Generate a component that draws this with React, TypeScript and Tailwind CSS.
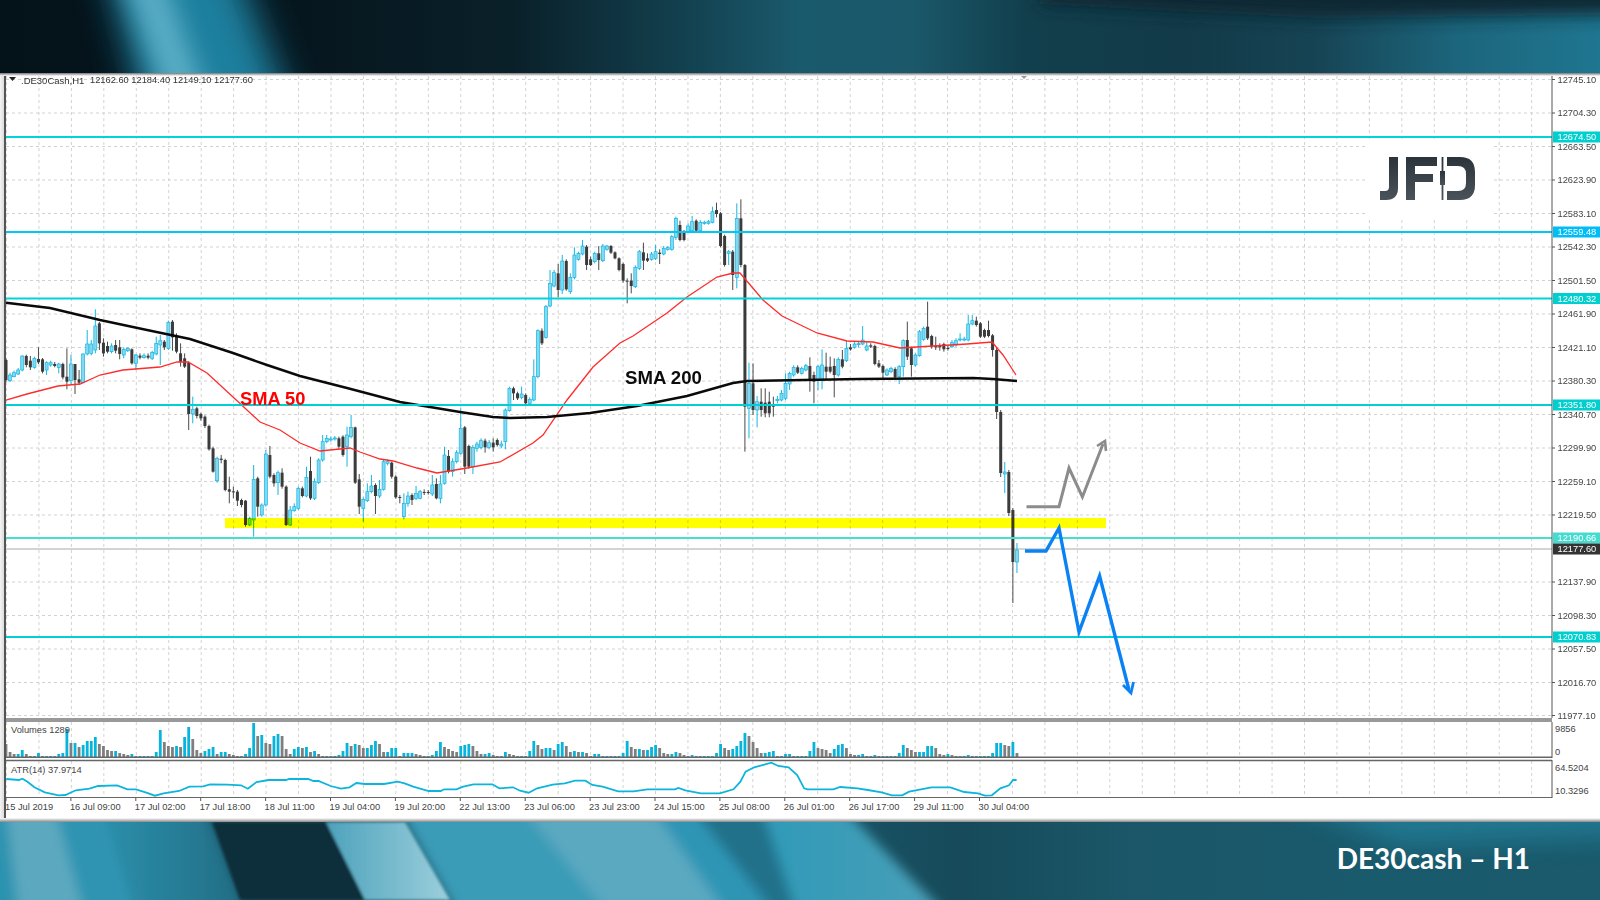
// candles as [open, close, high?, low?] in crop pixels, converted to page y below
type Raw = number[];

const leftBars: Raw[] = [
  [210, 270, 205, 275], [272, 255, 248, 276], [260, 248, 242, 262], [252, 240, 234, 255], [240, 198, 196, 244], [198, 225, 194, 232], [212, 232, 198, 240], [232, 205, 200, 236],
  [207, 217, 172, 222], [208, 245, 204, 250], [240, 218, 214, 255], [225, 218, 212, 230], [222, 228, 216, 232], [232, 222, 218, 250], [222, 262, 218, 268], [260, 275, 175, 298],
  [272, 222, 195, 285], [222, 270, 222, 312], [268, 278, 240, 285], [278, 192, 190, 280], [192, 162, 120, 196], [190, 162, 150, 196], [180, 108, 58, 190], [100, 160, 96, 180],
  [158, 190, 145, 200], [168, 185, 155, 190], [185, 168, 160, 190], [165, 182, 150, 190], [172, 192, 150, 208], [195, 178, 172, 205], [182, 175, 172, 186], [178, 220, 175, 224],
  [220, 195, 192, 240], [197, 203, 190, 208], [203, 197, 190, 206], [197, 203, 190, 208], [205, 187, 182, 210], [192, 160, 140, 196], [165, 152, 135, 225], [155, 172, 150, 180],
  [175, 97, 92, 180], [95, 142, 90, 182], [140, 185, 130, 190], [190, 215, 160, 230], [205, 230, 190, 234], [218, 372, 214, 420], [372, 358, 320, 400], [355, 378, 350, 385],
  [372, 385, 368, 392], [380, 408, 376, 414], [408, 478, 404, 482], [475, 545, 470, 548], [572, 505, 500, 578], [506, 510, 495, 520], [510, 600, 506, 604], [598, 605, 560, 640],
  [604, 607, 590, 625], [605, 632, 600, 648], [630, 645, 626, 652], [632, 705, 630, 710], [705, 685, 680, 708], [690, 568, 525, 740], [565, 650, 560, 680], [675, 645, 640, 680],
  [645, 492, 480, 650], [495, 560, 468, 565], [555, 580, 550, 590], [578, 548, 542, 615], [548, 590, 535, 596], [590, 705, 586, 708], [705, 660, 648, 708], [662, 650, 640, 665],
  [655, 595, 590, 660], [595, 618, 590, 622], [618, 562, 530, 622], [543, 625, 500, 630], [625, 575, 565, 630], [578, 510, 505, 582], [510, 455, 435, 515], [455, 445, 435, 460],
  [450, 447, 440, 455], [447, 444, 438, 452], [445, 470, 440, 476], [440, 495, 436, 500], [470, 435, 410, 530], [440, 412, 375, 445], [412, 578, 410, 582], [568, 650, 552, 672],
  [655, 628, 622, 695], [632, 605, 580, 636], [605, 588, 555, 610], [585, 618, 580, 672], [618, 598, 570, 624], [598, 515, 510, 602], [520, 515, 508, 526], [518, 560, 515, 566],
  [560, 622, 556, 626], [621, 624, 615, 640], [680, 640, 610, 688], [640, 618, 605, 650], [615, 630, 610, 645], [625, 610, 588, 630], [625, 605, 600, 628], [606, 609, 598, 615],
  [606, 609, 600, 614], [612, 585, 555, 618], [582, 625, 565, 628], [625, 582, 555, 640], [580, 495, 470, 584], [498, 545, 480, 550], [545, 515, 505, 560], [515, 488, 480, 520],
  [490, 415, 355, 494], [412, 530, 408, 552], [468, 530, 464, 536], [530, 472, 465, 552], [475, 462, 455, 485], [472, 452, 445, 478], [452, 472, 446, 488], [472, 458, 450, 478],
  [458, 472, 445, 485], [450, 465, 445, 470], [468, 462, 452, 475], [455, 360, 355, 478], [362, 295, 290, 365], [295, 310, 290, 330], [310, 325, 305, 330],
];

const rightBars: Raw[] = [
  [622, 612, 590, 628], [615, 640, 610, 645], [640, 628, 622, 645], [630, 560, 508, 634], [560, 422, 418, 565], [422, 460, 415, 465], [442, 350, 345, 446], [348, 280, 240, 352],
  [288, 248, 240, 292], [250, 300, 222, 322], [300, 213, 195, 312], [213, 298, 208, 302], [305, 262, 250, 312], [262, 195, 172, 268], [208, 190, 185, 212], [192, 168, 150, 196],
  [170, 225, 165, 240], [208, 225, 200, 228], [215, 190, 185, 220], [190, 210, 168, 240], [212, 168, 162, 216], [178, 168, 165, 182], [168, 188, 165, 192], [187, 205, 184, 208],
  [205, 240, 202, 244], [222, 272, 218, 278], [272, 275, 265, 340], [272, 288, 250, 310], [290, 232, 226, 294], [235, 185, 180, 240], [187, 212, 158, 240], [205, 212, 190, 216],
  [208, 192, 186, 212], [205, 185, 165, 210], [188, 192, 178, 222], [192, 175, 168, 196], [178, 173, 168, 182], [178, 140, 135, 182], [142, 85, 80, 150], [105, 150, 92, 154],
  [125, 150, 120, 154], [125, 108, 100, 128], [122, 95, 78, 126], [92, 122, 88, 126], [122, 97, 90, 126], [100, 97, 92, 104], [100, 95, 90, 104], [97, 65, 50, 100],
  [60, 72, 38, 82], [70, 168, 66, 172], [138, 225, 134, 230], [190, 185, 180, 225], [185, 255, 180, 300], [262, 85, 40, 295], [85, 225, 28, 232], [225, 650, 222, 785],
  [655, 580, 518, 745], [580, 660, 520, 675], [660, 635, 618, 712], [635, 660, 595, 680], [638, 670, 595, 682], [635, 670, 605, 682], [646, 650, 620, 680], [632, 628, 618, 640],
  [630, 610, 600, 634], [625, 580, 550, 630], [582, 550, 545, 600], [555, 532, 526, 560], [532, 548, 526, 552], [550, 535, 530, 554], [540, 527, 522, 544], [528, 570, 502, 605],
  [555, 575, 545, 640], [570, 530, 525, 600], [570, 525, 478, 598], [530, 545, 488, 570], [530, 545, 500, 550], [528, 555, 505, 622], [555, 508, 502, 560], [508, 530, 480, 535],
  [512, 475, 452, 516], [472, 478, 462, 482], [472, 462, 456, 476], [464, 461, 456, 472], [462, 450, 408, 466], [480, 468, 455, 484], [466, 470, 460, 474], [468, 522, 464, 526],
  [520, 530, 510, 534], [528, 548, 524, 565], [555, 540, 535, 558], [545, 535, 530, 550], [537, 562, 532, 566], [560, 530, 525, 582], [530, 452, 448, 560], [450, 500, 395, 510],
  [475, 525, 470, 560], [525, 495, 490, 530], [497, 425, 420, 500], [448, 415, 410, 452], [410, 445, 335, 450], [438, 470, 434, 476], [468, 472, 440, 480], [468, 472, 460, 482],
  [462, 478, 458, 485], [474, 477, 465, 482], [470, 458, 450, 474], [465, 452, 445, 470], [450, 447, 430, 454], [449, 447, 440, 454], [450, 402, 375, 454], [402, 392, 375, 406],
  [392, 405, 380, 410], [400, 440, 396, 444], [420, 440, 416, 444], [420, 438, 392, 442], [436, 480, 432, 500],
];

// last bars, read directly as page y
const lastBars: Raw[] = [
  [350, 412, 348, 419], [412, 473, 410, 477], [474, 472, 462, 493], [472, 513, 470, 516], [510, 562, 508, 603], [562, 550, 543, 573],
];

const candles = [
  ...leftBars.map((b) => b.map((v) => 290 + v / 3)),
  ...rightBars.map((b) => b.map((v) => 190 + v / 3)),
  ...lastBars,
];

const barX = (k: number) => 6 + 4.06 * k;

const volumes = [
  13, 5, 3, 3, 7, 3, 1, 1, 4, 1, 1, 1, 1, 3, 4, 28, 14, 14, 10, 12, 16, 16, 20, 13, 11, 7, 6, 6, 4, 3, 2, 3, 1, 1, 1, 1, 1, 5, 27, 15, 11, 10, 11, 10, 20, 30, 18, 7, 4, 6,
  8, 10, 3, 5, 5, 3, 2, 1, 1, 3, 9, 34, 21, 22, 14, 13, 21, 23, 21, 8, 3, 8, 10, 9, 10, 5, 6, 3, 1, 1, 1, 1, 2, 6, 14, 11, 13, 12, 9, 9, 12, 16, 13, 5, 5, 9, 9, 1, 4, 4,
  4, 3, 2, 1, 1, 2, 6, 15, 10, 8, 6, 5, 11, 12, 13, 11, 6, 3, 3, 4, 2, 1, 1, 5, 3, 2, 1, 1, 1, 6, 16, 12, 8, 9, 9, 7, 13, 15, 11, 5, 6, 5, 5, 4, 1, 3, 3, 1, 1, 1,
  1, 1, 4, 16, 10, 8, 8, 7, 7, 10, 12, 9, 4, 3, 3, 5, 4, 2, 1, 2, 1, 1, 1, 1, 1, 4, 13, 9, 7, 8, 11, 16, 24, 21, 15, 9, 4, 4, 5, 6, 1, 1, 3, 3, 1, 1, 1, 1, 6, 15,
  9, 8, 7, 4, 8, 12, 13, 9, 3, 2, 2, 3, 1, 1, 2, 1, 1, 1, 1, 1, 4, 12, 9, 7, 5, 5, 5, 11, 11, 9, 3, 2, 3, 2, 1, 1, 1, 2, 1, 1, 1, 1, 1, 4, 14, 14, 12, 11, 15, 4,
];

const sma200 = '6,302.7 50,308 100,320 147,330 190,339 233,353 267,365 300,376 347,388 400,402 460,412 493,417 510,418 547,417 590,413 637,406 687,396 733,383 747,381 860,379 973,378 993,379 1017,381';
const sma50 = '6,400 27,394 58,386 80,384 100,375 123,370 160,367 177,362 188,362 207,373 233,397 260,422 280,430 300,443 320,451 350,448 360,452 380,459 393,461 417,468 437,473 467,468 500,462 533,443 543,435 567,400 593,367 620,343 633,336 667,313 687,297 717,277 733,273 740,273 763,300 782,316 817,333 847,341 873,342 900,348 933,346 967,344 992,342 1003,355 1016,375';

const atrA = [18, 207, 55, 210, 65, 206, 80, 215, 100, 232, 130, 247, 170, 256, 190, 255, 220, 241, 260, 236, 285, 228, 340, 226, 370, 238, 395, 238, 425, 248, 450, 257, 475, 250, 520, 243, 550, 230, 590, 229, 610, 223, 660, 224, 700, 226, 720, 236, 745, 216, 780, 210, 830, 210, 840, 207, 895, 207, 910, 213, 925, 213, 960, 228, 990, 236, 1015, 232, 1035, 219, 1060, 222, 1115, 222, 1155, 215, 1175, 220, 1200, 230, 1245, 243, 1280, 243, 1290, 238, 1325, 238, 1345, 230, 1375, 223, 1430, 223, 1450, 235, 1490, 232];
const atrB = [0, 242, 25, 248, 50, 235, 95, 224, 130, 220, 160, 212, 190, 212, 210, 225, 240, 230, 285, 244, 330, 244, 370, 238, 450, 238, 460, 234, 480, 241, 525, 250, 580, 250, 620, 238, 640, 215, 655, 185, 680, 172, 730, 158, 750, 168, 780, 172, 805, 195, 825, 235, 835, 238, 910, 238, 930, 231, 980, 235, 1010, 240, 1050, 247, 1080, 256, 1110, 256, 1130, 245, 1195, 232, 1250, 232, 1290, 246, 1330, 250, 1350, 257, 1370, 256, 1395, 235, 1420, 226, 1432, 210, 1442, 210];

function atrPoints() {
  const pts: string[] = [];
  for (let i = 0; i < atrA.length; i += 2) pts.push(`${(atrA[i] / 2.904).toFixed(1)},${(710 + atrA[i + 1] / 3).toFixed(1)}`);
  for (let i = 0; i < atrB.length; i += 2) pts.push(`${(520 + atrB[i] / 2.904).toFixed(1)},${(710 + atrB[i + 1] / 3).toFixed(1)}`);
  return pts.join(' ');
}

const priceTicks: [string, number][] = [
  ['12745.10', 79.5], ['12704.30', 113], ['12663.50', 146.5], ['12623.90', 180], ['12583.10', 213.5], ['12542.30', 247], ['12501.50', 280.5],
  ['12461.90', 314], ['12421.10', 347.5], ['12380.30', 381], ['12340.70', 414.5], ['12299.90', 448], ['12259.10', 481.5], ['12219.50', 515],
  ['12137.90', 582], ['12098.30', 615.5], ['12057.50', 649], ['12016.70', 682.5], ['11977.10', 715.5],
];

const levels = [
  { label: '12674.50', y: 137, line: '#00d4d8', box: '#00cfcf', w: 2 },
  { label: '12559.48', y: 232, line: '#00c8f5', box: '#00bdf5', w: 2 },
  { label: '12480.32', y: 298.5, line: '#00d4d8', box: '#00cfcf', w: 2 },
  { label: '12351.80', y: 405, line: '#00d0d4', box: '#00cfcf', w: 2 },
  { label: '12190.66', y: 538, line: '#45e0d2', box: '#45dccf', w: 2 },
  { label: '12070.83', y: 637, line: '#00d0d4', box: '#00cfcf', w: 2 },
];

const timeLabels = [
  '15 Jul 2019', '16 Jul 09:00', '17 Jul 02:00', '17 Jul 18:00', '18 Jul 11:00', '19 Jul 04:00', '19 Jul 20:00', '22 Jul 13:00',
  '23 Jul 06:00', '23 Jul 23:00', '24 Jul 15:00', '25 Jul 08:00', '26 Jul 01:00', '26 Jul 17:00', '29 Jul 11:00', '30 Jul 04:00',
];

const vGrid = Array.from({ length: 48 }, (_, i) => 6.5 + 32.45 * i);

function VerticalGrid({ top, bottom }: { top: number; bottom: number }) {
  return (
    <g stroke="#d2d2d2" strokeWidth="1" strokeDasharray="3 3">
      {vGrid.map((x) => (
        <line key={x} x1={x} x2={x} y1={top} y2={bottom} />
      ))}
    </g>
  );
}

function Candles() {
  return (
    <g>
      {candles.map((c, k) => {
        const x = barX(k);
        const [o, cl, h, l] = c;
        const bull = cl < o;
        const top = Math.min(o, cl);
        const height = Math.max(Math.abs(o - cl), 1);
        return (
          <g key={k}>
            <line x1={x} x2={x} y1={h} y2={l} stroke={bull ? '#14b6e2' : '#4a4a4a'} strokeWidth="1" />
            <rect
              x={x - 1.5}
              y={top}
              width="3"
              height={height}
              fill={bull ? '#84d9f1' : '#3b3b3b'}
              stroke={bull ? '#14b6e2' : 'none'}
              strokeWidth="0.7"
            />
          </g>
        );
      })}
    </g>
  );
}

function JfdLogo() {
  return (
    <g fill="url(#jfd)">
      <path d="M1389 157H1398V188Q1398 200 1386 200H1380V191H1385Q1389 191 1389 187Z" />
      <path d="M1406 157H1437V166H1415V174H1433V182H1415V200H1406Z" />
      <rect x="1441.6" y="157" width="1.8" height="43" />
      <rect x="1440" y="171" width="5" height="14" />
      <path d="M1447 157H1460Q1475 157 1475 172V185Q1475 200 1460 200H1447V191H1458Q1466 191 1466 183V174Q1466 166 1458 166H1447Z" />
    </g>
  );
}

function MainPane() {
  return (
    <svg className="block h-[642px] w-[1594px] overflow-visible" viewBox="6 76 1594 642">
      <defs>
        <linearGradient id="jfd" x1="0" x2="0" y1="0" y2="1">
          <stop offset="0" stopColor="#2b333b" />
          <stop offset="1" stopColor="#4a525a" />
        </linearGradient>
      </defs>
      <rect x="6" y="76" width="1594" height="642" fill="#fff" />
      <VerticalGrid top={76} bottom={718} />
      <g stroke="#d2d2d2" strokeWidth="1" strokeDasharray="3 3">
        {priceTicks.map(([label, y]) => (
          <line key={label} x1="6" x2="1552" y1={y} y2={y} />
        ))}
      </g>
      <rect x="1366" y="139" width="125" height="78" fill="#fff" />
      <JfdLogo />
      <polygon points="1021,76 1027,76 1024,79" fill="#999" />
      <line x1="6" x2="1552" y1="549" y2="549" stroke="#a8a8a8" strokeWidth="1" />
      <Candles />
      <polyline points={sma50} fill="none" stroke="#ff2b2b" strokeWidth="1.3" />
      <polyline points={sma200} fill="none" stroke="#0a0a0a" strokeWidth="2.4" />
      <rect x="225" y="518" width="881" height="10" fill="#ffff00" className="mix-blend-multiply" />
      {levels.map((l) => (
        <line key={l.label} x1="6" x2="1552" y1={l.y} y2={l.y} stroke={l.line} strokeWidth={l.w} />
      ))}
      <text x="240" y="398" fontSize="18.3" fontWeight="700" fill="#ff0000" dominantBaseline="central">SMA 50</text>
      <text x="625" y="377.5" fontSize="18.6" fontWeight="700" fill="#0c0c0c" dominantBaseline="central">SMA 200</text>
      <g fill="none" strokeLinejoin="miter">
        <polyline points="1026.5,506.7 1059,506.7 1069,468 1082.4,497 1103,444" stroke="#8c8c8c" strokeWidth="3" />
        <polyline points="1097,446 1105,441 1106,451" stroke="#8c8c8c" strokeWidth="2.6" />
        <polyline points="1025,551 1046,551 1059,528 1079,632 1099.6,576 1129,690" stroke="#0a82f5" strokeWidth="3.4" />
        <polyline points="1123,685 1131,693 1133.5,682" stroke="#0a82f5" strokeWidth="2.8" />
      </g>
      <line x1="1552" x2="1552" y1="76" y2="718" stroke="#555" strokeWidth="1" />
      <polygon points="9,77 16,77 12.5,81" fill="#222" />
      <text x="21" y="80" fontSize="9.5" fill="#333" dominantBaseline="central">.DE30Cash,H1</text>
      <text x="90" y="80" fontSize="9.3" fill="#333" dominantBaseline="central">12162.60 12184.40 12149.10 12177.60</text>
      {priceTicks.map(([label, y]) => (
        <g key={label}>
          <line x1="1552" x2="1555" y1={y} y2={y} stroke="#555" />
          <text x="1557.5" y={y} fontSize="9.3" fill="#444" dominantBaseline="central">{label}</text>
        </g>
      ))}
      {levels.map((l) => (
        <g key={l.label}>
          <rect x="1553" y={l.y - 5.5} width="47" height="11" fill={l.box} />
          <text x="1557.5" y={l.y} fontSize="9.3" fill="#fff" dominantBaseline="central">{l.label}</text>
        </g>
      ))}
      <rect x="1553" y="543.5" width="47" height="11" fill="#333" />
      <text x="1557.5" y="549" fontSize="9.3" fill="#fff" dominantBaseline="central">12177.60</text>
    </svg>
  );
}

function VolumePane() {
  return (
    <svg className="block h-[36px] w-[1594px]" viewBox="6 722 1594 36">
      <rect x="6" y="722" width="1594" height="36" fill="#fff" />
      <VerticalGrid top={722} bottom={757} />
      {volumes.map((v, k) => (
        <rect
          key={k}
          x={barX(k) - 1.4}
          y={757 - v}
          width="2.8"
          height={v}
          fill={k > 0 && v >= volumes[k - 1] ? '#06b4dc' : '#7f7f7f'}
        />
      ))}
      <line x1="6" x2="1552" y1="757.2" y2="757.2" stroke="#666" strokeWidth="1.4" />
      <line x1="1552" x2="1552" y1="722" y2="758" stroke="#555" />
      <text x="11" y="729.5" fontSize="9.3" fill="#444" dominantBaseline="central">Volumes 1289</text>
      <text x="1555" y="729" fontSize="9.3" fill="#444" dominantBaseline="central">9856</text>
      <text x="1555" y="751.5" fontSize="9.3" fill="#444" dominantBaseline="central">0</text>
    </svg>
  );
}

function AtrPane() {
  return (
    <svg className="block h-[40px] w-[1594px]" viewBox="6 758 1594 40">
      <rect x="6" y="758" width="1594" height="40" fill="#fff" />
      <VerticalGrid top={761} bottom={797} />
      <line x1="6" x2="1552" y1="760.5" y2="760.5" stroke="#666" strokeWidth="1.4" />
      <polyline points={atrPoints()} fill="none" stroke="#0db4dc" strokeWidth="1.8" />
      <line x1="6" x2="1552" y1="797.5" y2="797.5" stroke="#666" strokeWidth="1" />
      <line x1="1552" x2="1552" y1="760" y2="798" stroke="#555" />
      <text x="11" y="770" fontSize="9.3" fill="#444" dominantBaseline="central">ATR(14) 37.9714</text>
      <text x="1555" y="767.5" fontSize="9.3" fill="#444" dominantBaseline="central">64.5204</text>
      <text x="1555" y="791" fontSize="9.3" fill="#444" dominantBaseline="central">10.3296</text>
    </svg>
  );
}

function TimeAxis() {
  return (
    <svg className="block h-[20px] w-[1594px]" viewBox="6 798 1594 20">
      <rect x="6" y="798" width="1594" height="20" fill="#fff" />
      {timeLabels.map((t, i) => {
        const x = 6 + 64.9 * i;
        return (
          <g key={t}>
            <line x1={x} x2={x} y1="798" y2="801" stroke="#555" />
            <text x={x - 1} y="807" fontSize="9.3" fill="#444" dominantBaseline="central">{t}</text>
          </g>
        );
      })}
    </svg>
  );
}

function TopArt() {
  return (
    <svg className="absolute inset-0 h-full w-full" viewBox="0 0 1600 73" preserveAspectRatio="none">
      <defs>
        <linearGradient id="topBase">
          <stop offset="0" stopColor="#04121a" />
          <stop offset="0.19" stopColor="#06161e" />
          <stop offset="0.32" stopColor="#0a2029" />
          <stop offset="0.42" stopColor="#123e4c" />
          <stop offset="0.5" stopColor="#1a5a6d" />
          <stop offset="0.57" stopColor="#1a586a" />
          <stop offset="0.64" stopColor="#123f4d" />
          <stop offset="0.74" stopColor="#123a48" />
          <stop offset="0.82" stopColor="#164353" />
          <stop offset="0.91" stopColor="#1c657c" />
          <stop offset="1" stopColor="#1f7690" />
        </linearGradient>
        <filter id="blurA" filterUnits="userSpaceOnUse" x="-200" y="-200" width="2000" height="500"><feGaussianBlur stdDeviation="18" /></filter>
        <filter id="blurB" filterUnits="userSpaceOnUse" x="-200" y="-200" width="2000" height="500"><feGaussianBlur stdDeviation="13" /></filter>
        <filter id="blurC" filterUnits="userSpaceOnUse" x="-200" y="-200" width="2000" height="500"><feGaussianBlur stdDeviation="9" /></filter>
      </defs>
      <rect width="1600" height="73" fill="url(#topBase)" />
      <polygon points="100,-60 225,-60 300,130 150,130" fill="#1c7f9e" filter="url(#blurA)" />
      <polygon points="110,-60 150,-60 218,130 178,130" fill="#5cafc6" filter="url(#blurB)" />
      <polygon points="1040,-60 1650,-60 1650,14 1320,18 1040,4" fill="#0d2730" filter="url(#blurC)" />
    </svg>
  );
}

function BottomArt() {
  const softBands: [number, number, number, number, string][] = [
    [-20, 12, 12, -20, '#2b93b0'],
    [12, 62, 78, 12, '#5ba9bf'],
    [62, 110, 130, 78, '#2f94b2'],
    [110, 212, 240, 130, 'url(#botA)'],
    [405, 530, 600, 450, '#3a9cb8'],
    [530, 660, 720, 600, '#5aa9c1'],
    [660, 700, 768, 720, '#2f95b5'],
    [700, 768, 790, 768, '#23718a'],
    [768, 851, 938, 790, 'url(#botC)'],
  ];
  const hardBands: [number, number, number, number, string][] = [
    [212, 326, 365, 240, '#0f2f3a'],
    [326, 405, 450, 365, 'url(#botB)'],
  ];
  return (
    <svg className="absolute inset-0 h-full w-full" viewBox="0 0 1600 78" preserveAspectRatio="none">
      <defs>
        <linearGradient id="botBase">
          <stop offset="0.5" stopColor="#1a5668" />
          <stop offset="0.6" stopColor="#164a5a" />
          <stop offset="0.7" stopColor="#1a5667" />
          <stop offset="0.85" stopColor="#1a5a6d" />
          <stop offset="1" stopColor="#1a5a6c" />
        </linearGradient>
        <linearGradient id="botA">
          <stop offset="0" stopColor="#2b8fab" />
          <stop offset="1" stopColor="#226c83" />
        </linearGradient>
        <linearGradient id="botB">
          <stop offset="0" stopColor="#4da2bc" />
          <stop offset="1" stopColor="#9ccfdc" />
        </linearGradient>
        <linearGradient id="botC">
          <stop offset="0" stopColor="#2f9ab8" />
          <stop offset="1" stopColor="#4a9fb8" />
        </linearGradient>
        <filter id="soft" filterUnits="userSpaceOnUse" x="-200" y="-200" width="2000" height="500"><feGaussianBlur stdDeviation="6" /></filter>
        <filter id="sharp" filterUnits="userSpaceOnUse" x="-200" y="-200" width="2000" height="500"><feGaussianBlur stdDeviation="1.5" /></filter>
        <filter id="soft2" filterUnits="userSpaceOnUse" x="-200" y="-200" width="2000" height="500"><feGaussianBlur stdDeviation="12" /></filter>
      </defs>
      <rect width="1600" height="78" fill="url(#botBase)" />
      <polygon points="1270,-30 1650,-30 1650,14 1400,24" fill="#207c95" opacity="0.85" filter="url(#soft2)" />
      <g filter="url(#soft)">
        {softBands.map(([a, b, c, d, fill]) => (
          <polygon key={a} points={`${a - 6},-12 ${b - 6},-12 ${c + 6},90 ${d + 6},90`} fill={fill} />
        ))}
      </g>
      <g filter="url(#sharp)">
        {hardBands.map(([a, b, c, d, fill]) => (
          <polygon key={a} points={`${a},0 ${b},0 ${c},78 ${d},78`} fill={fill} />
        ))}
      </g>
    </svg>
  );
}

export default function App() {
  return (
    <div className="flex h-[900px] w-[1600px] flex-col overflow-hidden bg-white font-['Liberation_Sans',Arial,sans-serif]">
      <div className="relative h-[73px] shrink-0">
        <TopArt />
      </div>

      <div className="h-[3px] shrink-0 bg-gradient-to-b from-[#777777] to-white" />

      <div className="flex h-[742px] shrink-0">
        <div className="w-[6px] shrink-0 bg-[linear-gradient(90deg,#f4f4f4_0,#dddddd_62%,#555555_70%,#555555_100%)]" />
        <div className="flex w-[1594px] flex-col">
          <MainPane />
          <div className="h-[4px] w-[1546px] shrink-0 bg-[#999999]" />
          <VolumePane />
          <AtrPane />
          <TimeAxis />
        </div>
      </div>

      <div className="h-[4px] shrink-0 bg-gradient-to-b from-white to-[#8a8a8a]" />

      <div className="relative flex h-[78px] shrink-0 items-center justify-end pr-[70px] pb-[6px]">
        <BottomArt />
        <span className="relative font-['Lato',sans-serif] text-[28px] font-bold text-white">DE30cash – H1</span>
      </div>
    </div>
  );
}
